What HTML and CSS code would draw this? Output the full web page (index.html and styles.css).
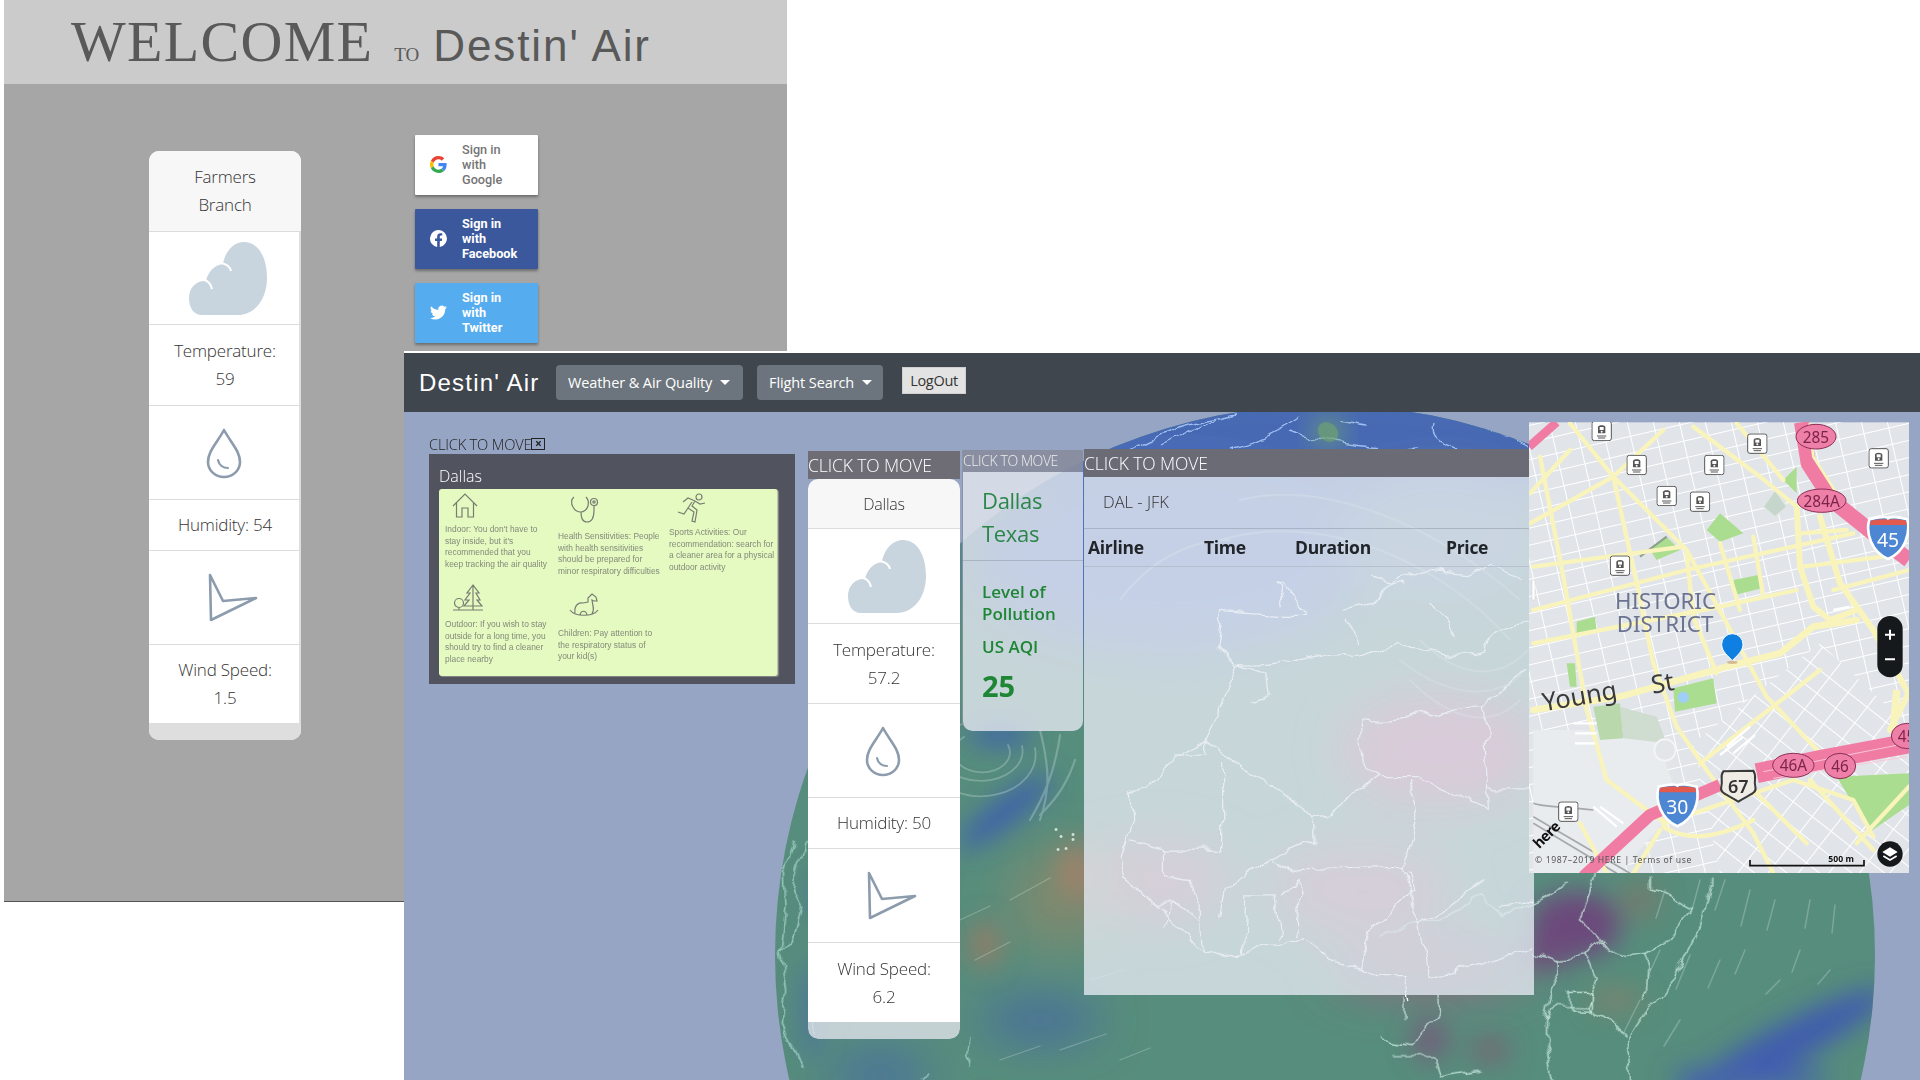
FILE: index.html
```html
<!DOCTYPE html>
<html lang="en">
<head>
  <meta charset="UTF-8" />
  <title>Destin' Air</title>
  <link rel="stylesheet" href="styles.css">
</head>
<body>
  <svg class="defs" width="0" height="0">
    <symbol id="cloud" viewBox="0 0 78 73">
      <path d="M13 73C4 73 0 65 0 56C0 45 8 38 17 39C19 30 25 23 34 22C36 10 44 0 55 0C69 0 78 15 78 36C78 58 65 73 49 73Z" fill="#c9d5de"/>
      <path d="M15 38C19 39 22 42 23 47M32 21C37 22 41 25 42 29" fill="none" stroke="#fff" stroke-width="2"/>
    </symbol>
    <symbol id="drop" viewBox="0 0 36 52">
      <path d="M18 3C11 16 2 24 2 35A16 15 0 0 0 34 35C34 24 25 16 18 3Z" fill="none" stroke="#8c9cad" stroke-width="2.6" stroke-linejoin="round"/>
      <path d="M12 33C13 38 17 41 22 41" fill="none" stroke="#8c9cad" stroke-width="2.2" stroke-linecap="round"/>
    </symbol>
    <symbol id="wind" viewBox="0 0 50 49">
      <path d="M2 2L15 28L48 25L3 47Z" fill="none" stroke="#8c9cad" stroke-width="2.6" stroke-linejoin="round"/>
    </symbol>
    <symbol id="train" viewBox="0 0 62 62">
      <rect x="2" y="2" width="58" height="58" rx="7" fill="#fff" stroke="#555" stroke-width="3"/>
      <path d="M20 38V20C20 12 42 12 42 20V38Z" fill="#555"/>
      <rect x="25" y="19" width="12" height="9" fill="#fff"/>
      <circle cx="31" cy="33" r="3" fill="#fff"/>
      <path d="M17 46H45M20 52H42" stroke="#555" stroke-width="3"/>
    </symbol>
    <pattern id="blocksA" width="76" height="50" patternUnits="userSpaceOnUse" patternTransform="rotate(-13)">
      <path d="M0 0H76M0 0V50" stroke="#fff" stroke-width="6" fill="none"/>
    </pattern>
    <pattern id="blocksB" width="72" height="60" patternUnits="userSpaceOnUse" patternTransform="rotate(38)">
      <path d="M0 0H72M0 0V60" stroke="#fff" stroke-width="6" fill="none"/>
    </pattern>
    <filter id="soft" x="-50%" y="-50%" width="200%" height="200%"><feGaussianBlur stdDeviation="24"/></filter>
    <filter id="softer" x="-50%" y="-50%" width="200%" height="200%"><feGaussianBlur stdDeviation="13"/></filter>
    <filter id="wobble" x="-5%" y="-5%" width="110%" height="110%">
      <feTurbulence type="fractalNoise" baseFrequency=".035" numOctaves="3" seed="4"/>
      <feDisplacementMap in="SourceGraphic" scale="16" xChannelSelector="R" yChannelSelector="G"/>
    </filter>
    <clipPath id="globeClip"><circle cx="1325" cy="955" r="550"/></clipPath>
  </svg>

  <!-- login page behind -->
  <div class="login">
    <header class="login-head">
      <span class="welcome">WELCOME</span>
      <span class="to">TO</span>
      <span class="brand-big">Destin' Air</span>
    </header>
    <div class="login-body">
      <div class="card card-login">
        <div class="row row-head"><span>Farmers<br>Branch</span></div>
        <div class="row row-cloud"><svg class="ic-cloud"><use href="#cloud"/></svg></div>
        <div class="row row-text2"><span>Temperature:<br>59</span></div>
        <div class="row row-icon"><svg class="ic-drop"><use href="#drop"/></svg></div>
        <div class="row row-text1"><span>Humidity: 54</span></div>
        <div class="row row-icon"><svg class="ic-wind"><use href="#wind"/></svg></div>
        <div class="row row-text2 row-last"><span>Wind Speed:<br>1.5</span></div>
        <div class="card-foot"></div>
      </div>
      <div class="socials">
        <a class="social google">
          <svg viewBox="0 0 48 48"><path fill="#EA4335" d="M24 9.500c3.500 0 6.700 1.200 9.200 3.600l6.900-6.900C35.900 2.400 30.500 0 24 0 14.600 0 6.500 5.400 2.600 13.200l8 6.200C12.500 13.700 17.800 9.500 24 9.500z"/><path fill="#4285F4" d="M46.900 24.500c0-1.600-.1-3.100-.4-4.500H24v9h12.900c-.6 3-2.200 5.500-4.700 7.200l7.700 6c4.500-4.200 7-10.300 7-17.700z"/><path fill="#FBBC05" d="M10.500 28.600c-.5-1.400-.8-3-.8-4.600s.3-3.200.8-4.600l-8-6.200C.9 16.500 0 20.100 0 24s.9 7.500 2.600 10.800l7.900-6.200z"/><path fill="#34A853" d="M24 48c6.500 0 11.900-2.100 15.900-5.800l-7.700-6c-2.200 1.500-4.900 2.300-8.200 2.300-6.200 0-11.500-4.200-13.400-9.900l-8 6.200C6.500 42.600 14.600 48 24 48z"/></svg>
          <span>Sign in<br>with<br>Google</span>
        </a>
        <a class="social facebook">
          <svg viewBox="0 0 24 24"><path fill="#fff" d="M24 12a12 12 0 1 0-13.900 11.900v-8.400H7.100V12h3V9.400c0-3 1.800-4.700 4.500-4.700 1.300 0 2.700.2 2.700.2v3h-1.500c-1.500 0-2 .9-2 1.900V12h3.400l-.5 3.500h-2.900v8.400A12 12 0 0 0 24 12z"/></svg>
          <span>Sign in<br>with<br>Facebook</span>
        </a>
        <a class="social twitter">
          <svg viewBox="0 0 24 24"><path fill="#fff" d="M23.900 4.600a9.800 9.800 0 0 1-2.800.8 4.900 4.900 0 0 0 2.200-2.700 9.900 9.900 0 0 1-3.100 1.200 4.900 4.900 0 0 0-8.400 4.500A14 14 0 0 1 1.700 3.200a4.900 4.900 0 0 0 1.500 6.600 4.900 4.900 0 0 1-2.200-.6c0 2.400 1.700 4.400 3.900 4.900a4.900 4.900 0 0 1-2.200.1 4.900 4.900 0 0 0 4.600 3.400A9.900 9.900 0 0 1 0 19.600a14 14 0 0 0 7.500 2.200c9.100 0 14.300-7.700 14-14.600a10 10 0 0 0 2.400-2.600z"/></svg>
          <span>Sign in<br>with<br>Twitter</span>
        </a>
      </div>
    </div>
  </div>

  <!-- logged in page -->
  <div class="main">
    <svg class="globe" viewBox="404 353 1516 727">
      <g clip-path="url(#globeClip)">
        <rect x="770" y="400" width="1120" height="680" fill="#578d7c"/>
        <g filter="url(#soft)">
          <ellipse cx="1320" cy="440" rx="340" ry="70" fill="#4769b4"/>
          <ellipse cx="1170" cy="560" rx="200" ry="95" fill="#5371bd"/>
          <ellipse cx="1440" cy="540" rx="100" ry="60" fill="#6a88a8"/>
          <ellipse cx="1440" cy="750" rx="100" ry="55" fill="#b8567f"/>
          <ellipse cx="1160" cy="880" rx="70" ry="40" fill="#a8697c"/>
          <ellipse cx="1360" cy="890" rx="90" ry="45" fill="#a0667e"/>
          <ellipse cx="1430" cy="965" rx="100" ry="26" fill="#97667f"/>
          <ellipse cx="1040" cy="1020" rx="60" ry="18" fill="#4565a4"/>
          <ellipse cx="880" cy="1075" rx="50" ry="22" fill="#4a6da0"/>
          <ellipse cx="1060" cy="900" rx="50" ry="50" fill="#7e8a70"/>
        </g>
        <g filter="url(#softer)">
          <ellipse cx="1005" cy="812" rx="58" ry="13" fill="#3d5fae" transform="rotate(-38 1005 812)"/>
          <ellipse cx="1000" cy="735" rx="32" ry="10" fill="#3b5eb0"/>
          <ellipse cx="1075" cy="870" rx="18" ry="28" fill="#a98267" opacity=".75"/>
          <ellipse cx="985" cy="945" rx="16" ry="24" fill="#a8785f" opacity=".7"/>
          <ellipse cx="820" cy="895" rx="10" ry="28" fill="#4a6ea0" opacity=".7"/>
          <ellipse cx="812" cy="1010" rx="10" ry="50" fill="#4a6ca8" opacity=".8"/>
          <ellipse cx="1575" cy="925" rx="46" ry="34" fill="#6c4a7c"/>
          <ellipse cx="1545" cy="955" rx="24" ry="16" fill="#6e4b7c"/>
          <ellipse cx="1640" cy="900" rx="20" ry="20" fill="#7d7568" opacity=".7"/>
          <ellipse cx="1430" cy="1040" rx="18" ry="22" fill="#77577a" opacity=".85"/>
          <ellipse cx="1490" cy="1050" rx="20" ry="14" fill="#7a5f72" opacity=".8"/>
          <ellipse cx="1615" cy="1000" rx="28" ry="12" fill="#8a7f68" opacity=".7"/>
          <ellipse cx="1785" cy="1045" rx="115" ry="20" fill="#3f5caf" transform="rotate(-28 1785 1045)"/>
          <ellipse cx="1750" cy="1078" rx="80" ry="12" fill="#4561b0"/>
        </g>
        <!-- swirls and wind streaks -->
        <g fill="none" stroke="#cfe6e0" stroke-linecap="round" opacity=".3">
          <path d="M1008 745a28 20 0 1 1-44-8M1022 746a42 30 0 1 1-60-22M1035 748a55 42 0 1 1-82-30" stroke-width="1.800"/>
          <path d="M1060 735C1055 770 1045 795 1030 820M1075 760C1065 790 1050 805 1040 815M1040 730C1050 770 1050 790 1040 820" stroke-width="2.200"/>
          <path d="M960 920l30-14M975 960l35-18M1010 900l40-22M1090 980l34-10M830 780l12-30M820 850l8-30M1000 1060l40-14M1060 1050l46-16M1120 1060l30-12" stroke-width="1.300"/>
          <path d="M1700 880l-9 34M1725 880l-10 30M1750 890l-9 36M1775 900l-8 30M1660 950l-12 26M1690 955l-14 34M1720 960l-12 28M1640 1000l-16 32M1680 1020l-16 26M1810 900l-5 28M1835 905l-3 28M1780 980l-14 14M1830 970l-12 14M1665 890l-9 28M1745 950l-10 24M1800 950l-8 22" stroke-width="1.500"/>
          <path d="M1240 500C1320 480 1430 520 1520 600M1220 540C1320 510 1440 560 1510 640M1410 680C1450 720 1490 730 1520 700M1400 660C1450 700 1500 700 1525 670M1420 640C1460 680 1500 680 1528 650M1120 600C1150 560 1190 540 1230 540" stroke-width="2"/>
        </g>
        <!-- top of the globe -->
        <g fill="none" stroke="#9fbdee" stroke-width="1.400" filter="url(#wobble)">
          <path d="M1130 449C1160 432 1200 420 1240 414M1165 446L1215 420M1230 447C1260 440 1285 425 1300 415M1340 420L1370 425M1435 425C1430 440 1450 445 1460 448M1470 420L1525 448M1290 432C1330 445 1390 452 1420 449"/>
        </g>
        <ellipse cx="1328" cy="432" rx="15" ry="12" fill="#6fa56d" filter="url(#softer)"/>
        <ellipse cx="1328" cy="432" rx="11" ry="9" fill="#6fa56d" opacity=".6" transform="rotate(40 1328 432)"/>
        <!-- coast and borders, north Africa -->
        <g filter="url(#wobble)">
          <g fill="none" stroke="#fff" stroke-width="1.300" transform="translate(790 440) scale(.485 .408)">
            <path vector-effect="non-scaling-stroke" d="M1690 200C1660 240 1660 300 1560 420C1500 460 1440 470 1430 520C1370 540 1300 520 1250 490C1200 520 1160 540 1140 520C1060 530 990 560 925 550L880 680L855 740L800 770L740 850L700 870L700 960L680 1020L690 1075L745 1130L790 1180L850 1265L930 1250L1000 1240L1060 1225L1110 1270L1170 1290L1210 1320L1270 1320L1280 1380"/>
            <path vector-effect="non-scaling-stroke" d="M890 420L880 510L925 550M890 420L1000 430L1060 430L1000 340L1015 400M1140 420L1200 400L1250 340L1300 320L1400 330L1450 300L1500 340M1150 440L1170 500M1320 400L1370 480M1200 330L1270 350"/>
            <path vector-effect="non-scaling-stroke" d="M925 550L985 575L990 630L950 645M855 740L1060 905L1080 925L1080 990L1000 1020L900 1100L890 1170M890 790V1005H770M855 740V770H795M1175 680L1185 800L1220 825L1110 915L1080 925M1220 825L1290 825L1440 905L1430 650M1440 855H1530M1275 835L1295 900L1260 1050L1290 1170L1300 1190M1430 1080L1300 1190L1320 1320L1530 1240M1000 1020L1040 1070L1070 1055L1260 1050M1270 1060L1280 1100L1200 1200L1170 1290M940 1115H1000L1010 1220M940 1115L935 1250M1010 1115L1050 1085L1045 1220M745 1135H790L770 1190M700 980L770 1005V1070L830 1080L845 1130L850 1265M790 1135L845 1180M1175 680C1270 700 1400 640 1430 650L1520 560M1460 1140L1530 1130"/>
          </g>
          <!-- east Africa -->
          <g fill="none" stroke="#c9eadf" stroke-width="1.200" transform="translate(1380 780) scale(.3448 .3333)">
            <path vector-effect="non-scaling-stroke" d="M965 280V320L930 450L870 570L790 680L720 790L730 900M790 280V330L900 390L830 490L780 520L770 660M620 280L600 350L575 410L640 485L600 530L530 540L450 520L440 510M640 485L660 510L720 530L780 520M600 530L630 600L600 680L510 680L480 720L480 800L500 900M600 680L720 770M0 470L100 440L210 400L300 340L350 400L440 370L490 350L550 300M525 540V580L495 650L480 720M180 640V680L130 740L100 800L30 790L0 770M30 830H150L170 890L290 870M75 650V720M550 640H610V690H550Z"/>
          </g>
          <!-- south America edge -->
          <path fill="none" stroke="#a9d6ce" stroke-width="1.200" transform="translate(760 700) scale(.3333)" vector-effect="non-scaling-stroke" d="M135 430L95 570L125 620L100 720L60 760L80 870L70 960L130 1100M145 930L160 1000M110 430L70 520L75 620L60 760M630 1020L620 1100M480 1130L510 1115"/>
        </g>
        <path fill="#cfe2dc" d="M1056 831a1.500 1.500 0 1 1 .1 0M1061 838a1.500 1.500 0 1 1 .1 0M1073 836a1.500 1.500 0 1 1 .1 0M1073 841a1.500 1.500 0 1 1 .1 0M1066 850a1.500 1.500 0 1 1 .1 0M1058 851a1.500 1.500 0 1 1 .1 0"/>
      </g>
    </svg>

    <nav class="navbar">
      <span class="brand">Destin' Air</span>
      <a class="nav-btn nav-weather">Weather &amp; Air Quality<i class="caret"></i></a>
      <a class="nav-btn nav-flight">Flight Search<i class="caret"></i></a>
      <button class="logout">LogOut</button>
    </nav>

    <!-- movable windows -->
    <section class="win win-advice">
      <div class="move-plain">CLICK TO MOVE<span class="close-x">×</span></div>
      <div class="advice-box">
        <div class="advice-city">Dallas</div>
        <div class="advice-grid">
          <div class="tip">
            <svg class="tip-ic house" viewBox="0 0 26 25"><path d="M1 13L13 1L25 13M4.500 10V24H10V15H16V24H21.500V10"/></svg>
            <p class="gap-6">Indoor: You don't have to<br>stay inside, but it's<br>recommended that you<br>keep tracking the air quality</p>
          </div>
          <div class="tip">
            <svg class="tip-ic steth" viewBox="0 0 28 28"><path d="M4 2C1 4 1 9 3 12C5 16 9 17 11 17C13 17 17 15 18 11C19 7 18 4 16 2M11 17C11 22 12 27 17 27C22 27 24 23 24 15V11"/><circle cx="24" cy="7" r="3.500"/><circle cx="24" cy="7" r="1.200"/></svg>
            <p class="gap-8">Health Sensitivities: People<br>with health sensitivities<br>should be prepared for<br>minor respiratory difficulties</p>
          </div>
          <div class="tip">
            <svg class="tip-ic runner" viewBox="0 0 30 30"><circle cx="22" cy="4" r="3"/><path d="M1 19L7 21L11 15L17 19L15 28L18 29L20 17L15 13L18 8L23 11L28 10M18 8L11 5L6 9M11 15L15 9"/></svg>
            <p class="gap-4">Sports Activities: Our<br>recommendation: search for<br>a cleaner area for a physical<br>outdoor activity</p>
          </div>
          <div class="tip tip-low">
            <svg class="tip-ic trees" viewBox="0 0 30 27"><circle cx="6" cy="19" r="4.500"/><path d="M0 26H30M6 23.500V26M20 26V1M20 1L14 9H17L12 16H16L11 22H29L24 16H27L23 9H26Z"/></svg>
            <p class="gap-8">Outdoor: If you wish to stay<br>outside for a long time, you<br>should try to find a cleaner<br>place nearby</p>
          </div>
          <div class="tip tip-horse">
            <svg class="tip-ic horse" viewBox="0 0 30 25"><path d="M1 17C6 24 24 24 29 17M6 20C5 13 9 9 14 10L19 9L19 5L23 1L27 4L28 8L25 8L23 7L24 13C25 16 24 19 23 21M11 22C12 17 17 17 18 22"/></svg>
            <p class="gap-10">Children: Pay attention to<br>the respiratory status of<br>your kid(s)</p>
          </div>
        </div>
      </div>
    </section>

    <section class="win win-weather">
      <div class="move-head">CLICK TO MOVE</div>
      <div class="card card-main">
        <div class="row row-head-small"><span>Dallas</span></div>
        <div class="row row-cloud-b"><svg class="ic-cloud"><use href="#cloud"/></svg></div>
        <div class="row row-text2-b"><span>Temperature:<br>57.2</span></div>
        <div class="row row-icon-b"><svg class="ic-drop"><use href="#drop"/></svg></div>
        <div class="row row-text1-b"><span>Humidity: 50</span></div>
        <div class="row row-icon-b"><svg class="ic-wind"><use href="#wind"/></svg></div>
        <div class="row row-text2-b row-last"><span>Wind Speed:<br>6.2</span></div>
        <div class="card-foot foot-clear"></div>
      </div>
    </section>

    <section class="win win-aqi">
      <div class="move-small">CLICK TO MOVE</div>
      <div class="aqi-place">Dallas<br>Texas</div>
      <div class="aqi-body">
        <div class="aqi-label">Level of<br>Pollution</div>
        <div class="aqi-label aqi-us">US AQI</div>
        <div class="aqi-num">25</div>
      </div>
    </section>

    <section class="win win-flights">
      <div class="move-flights">CLICK TO MOVE</div>
      <div class="route">DAL - JFK</div>
      <table class="flights">
        <tr><th class="c-air">Airline</th><th class="c-time">Time</th><th class="c-dur">Duration</th><th>Price</th></tr>
      </table>
    </section>

    <section class="win win-map">
      <svg class="map" viewBox="0 0 380 451">
        <g transform="translate(-9 -12) scale(.33333)">
          <rect x="27" y="37" width="1140" height="1353" fill="#e1e5e9"/>
          <rect x="27" y="37" width="1140" height="1353" fill="url(#blocksA)"/>
          <path d="M520 1000L900 700L1167 950V1390H600Z" fill="#e1e5e9"/>
          <path d="M520 1000L900 700L1167 950V1390H600Z" fill="url(#blocksB)"/>
          <path d="M40 960H400L480 1180L300 1390H40Z" fill="#e9ecef"/>
          <path d="M600 310L670 370L600 395L560 360ZM640 510L715 495L725 535L645 555ZM170 635L225 620L230 660L170 675ZM460 835L580 805L590 880L465 905ZM790 210L830 170V250ZM390 420L440 380L480 420L410 450ZM140 760L165 760L170 830L150 830ZM950 1100L1167 1090V1185L1050 1265Z" fill="#aadd90"/>
          <path d="M220 890L300 880L310 985L240 990Z" fill="#b9d9ad"/>
          <path d="M300 890L410 920L440 1000L310 985Z" fill="#cfdcd0"/>
          <ellipse cx="490" cy="862" rx="17" ry="17" fill="#9fcff5"/>
          <circle cx="435" cy="1020" r="32" fill="#e2e6e9" stroke="#f2f4f5" stroke-width="6"/>
          <path d="M730 290L765 240L800 290L765 320Z" fill="#c7d6cc" stroke="#dfe6df" stroke-width="4"/>
          <path d="M40 1220L330 1390M40 1240L290 1390M220 1200C120 1190 60 1190 40 1180" fill="none" stroke="#a6a9ab" stroke-width="5"/>
          <path d="M360 440L440 380" stroke="#8fa08a" stroke-width="7"/>
          <g fill="none" stroke="#f9f4bb" stroke-width="13" stroke-linejoin="round" stroke-linecap="round">
            <path d="M60 140L130 500L200 900L260 1110L380 1200L440 1240"/>
            <path d="M150 40L280 200L500 420L620 640L740 860L920 1050" />
            <path d="M280 200L350 520L400 760L470 950L560 1080L700 1270L760 1390"/>
            <path d="M30 340L280 200L430 60M30 250L150 120"/>
            <path d="M40 600L500 480L1000 370M40 700L600 590L830 540M40 470L490 410"/>
            <path d="M500 430L520 620L590 790M600 400L660 600M700 380L730 560"/>
            <path d="M520 50L720 200L830 290M650 40L790 210"/>
            <path d="M40 900L300 860L620 770L780 730L880 650L1010 630" stroke-width="20"/>
            <path d="M830 290L840 470L880 590L930 630L1010 600M900 320L960 520L1060 660L1165 850L1110 960" stroke-width="18"/>
            <path d="M850 470L1167 430M840 370L980 360M940 540L1167 480"/>
            <path d="M540 1060L900 780M430 1240L820 1110L1000 1170L1060 1280M870 1110L1060 1320M690 1130L860 1300M430 1250C520 1310 640 1260 700 1230M1010 1300L1167 1130" />
            <path d="M180 1240L260 1390M420 1260L340 1390" />
          </g>
          <g fill="none" stroke="#fff" stroke-width="7">
            <path d="M620 1010L690 950M640 1030L705 975M600 1035L670 980M160 940H230M165 970H230M165 1000H225"/>
            <path d="M940 600L990 590M220 1190L290 1250M240 1190L310 1240"/>
          </g>
          <g fill="none" stroke-linejoin="round">
            <path d="M845 37L865 160L935 270L1060 370L1167 450" stroke="#f07ca4" stroke-width="46"/>
            <path d="M868 40L880 140L950 250" stroke="#f9f4bb" stroke-width="8"/>
            <path d="M27 110L110 37" stroke="#f07ca4" stroke-width="26"/>
            <path d="M190 1400L390 1215L600 1125" stroke="#f07ca4" stroke-width="36"/>
            <path d="M710 1090L900 1050L1167 1000" stroke="#f07ca4" stroke-width="60"/>
            <path d="M730 1085L1160 1000M760 1105L1160 1040" stroke="#fbc6d8" stroke-width="3"/>
          </g>
          <path d="M1120 960L1130 840" stroke="#f9f4bb" stroke-width="22"/>
          <rect x="36" y="510" width="9" height="60" rx="2" fill="#fff" stroke="#b8bcc0"/>
          <use href="#train" x="214" y="32" width="62" height="62"/>
          <use href="#train" x="319" y="134" width="62" height="62"/>
          <use href="#train" x="552" y="134" width="62" height="62"/>
          <use href="#train" x="681" y="70" width="62" height="62"/>
          <use href="#train" x="1045" y="114" width="62" height="62"/>
          <use href="#train" x="409" y="227" width="62" height="62"/>
          <use href="#train" x="509" y="244" width="62" height="62"/>
          <use href="#train" x="269" y="436" width="62" height="62"/>
          <use href="#train" x="114" y="1174" width="62" height="62"/>

          <g class="shield-text">
            <ellipse cx="888" cy="80" rx="60" ry="37" fill="#ee7fa6" stroke="#8d2d55" stroke-width="3"/>
            <text x="888" y="98" fill="#7c2349" text-anchor="middle">285</text>
            <ellipse cx="905" cy="272" rx="73" ry="35" fill="#ee7fa6" stroke="#8d2d55" stroke-width="3"/>
            <text x="905" y="290" fill="#7c2349" text-anchor="middle">284A</text>
            <ellipse cx="820" cy="1066" rx="62" ry="36" fill="#ee7fa6" stroke="#8d2d55" stroke-width="3"/>
            <text x="820" y="1084" fill="#7c2349" text-anchor="middle">46A</text>
            <ellipse cx="960" cy="1068" rx="47" ry="38" fill="#ee7fa6" stroke="#8d2d55" stroke-width="3"/>
            <text x="960" y="1086" fill="#7c2349" text-anchor="middle">46</text>
            <ellipse cx="1162" cy="978" rx="48" ry="38" fill="#ee7fa6" stroke="#8d2d55" stroke-width="3"/>
            <text x="1133" y="996" fill="#7c2349">45</text>

            <path d="M1048 328C1075 322 1100 318 1104 325C1110 318 1140 322 1162 328C1172 370 1155 425 1104 447C1055 425 1036 370 1048 328Z" fill="#4d87d3" stroke="#fff" stroke-width="8"/>
            <path d="M1052 332C1075 328 1098 326 1104 330C1110 326 1140 328 1158 332L1160 345H1050Z" fill="#e25a4e"/>
            <text x="1104" y="410" fill="#fff" text-anchor="middle" class="shield-big">45</text>

            <path d="M416 1130C443 1124 468 1120 472 1127C478 1120 508 1124 530 1130C540 1172 523 1227 472 1249C423 1227 404 1172 416 1130Z" fill="#4d87d3" stroke="#fff" stroke-width="8"/>
            <path d="M420 1134C443 1130 466 1128 472 1132C478 1128 508 1130 526 1134L528 1147H418Z" fill="#e25a4e"/>
            <text x="472" y="1212" fill="#fff" text-anchor="middle" class="shield-big">30</text>

            <path d="M610 1084L700 1082C712 1100 700 1110 706 1130C712 1150 690 1152 655 1175C620 1152 598 1150 604 1130C610 1110 598 1100 610 1084Z" fill="#efece5" stroke="#3a3a3a" stroke-width="6"/>
            <text x="655" y="1150" fill="#333" text-anchor="middle" class="shield-67">67</text>
          </g>

          <text class="map-district" x="285" y="596" textLength="303" lengthAdjust="spacingAndGlyphs">HISTORIC</text>
          <text class="map-district" x="290" y="666" textLength="290" lengthAdjust="spacingAndGlyphs">DISTRICT</text>
          <text class="map-street" transform="translate(72 904) rotate(-10)">Young</text>
          <text class="map-street" transform="translate(398 851) rotate(-10)">St</text>

          <path d="M637 752C625 738 605 725 605 703A32 32 0 0 1 669 703C669 725 649 738 637 752Z" fill="#0f80e2" stroke="#fff" stroke-width="3"/>
          <ellipse cx="637" cy="757" rx="16" ry="5" fill="#c9a27c" opacity=".7"/>

          <text class="map-here" transform="translate(58 1318) rotate(-45)">here</text>
          <text class="map-copy" x="45" y="1358">© 1987–2019 HERE | Terms of use</text>
          <text class="map-scale" x="925" y="1355">500 m</text>
          <path d="M690 1350V1367H1032V1350" fill="none" stroke="#111" stroke-width="5"/>

          <rect x="1072" y="618" width="76" height="184" rx="38" fill="#15191c"/>
          <path d="M1095 674H1125M1110 659V689M1095 748H1125" stroke="#fff" stroke-width="6"/>
          <circle cx="1110" cy="1332" r="38" fill="#15191c"/>
          <path d="M1110 1312L1133 1326L1110 1340L1087 1326Z" fill="#fff"/>
          <path d="M1090 1338L1110 1350L1130 1338" fill="none" stroke="#fff" stroke-width="5"/>
        </g>
      </svg>
    </section>
  </div>
</body>
</html>
```

FILE: styles.css
```css
* {
  box-sizing: border-box;
  margin: 0;
  padding: 0;
}

html, body {
  width: 1920px;
  height: 1080px;
  overflow: hidden;
  background: #fff;
}

body {
  position: relative;
  font-family: "Open Sans", sans-serif;
  color: #333;
}

.defs {
  position: absolute;
}

/* login page */
.login {
  position: absolute;
  left: 4px;
  top: 0;
  width: 783px;
  height: 902px;
  background: #a6a6a6;
  border-bottom: 1px solid #555;
}

.login-head {
  height: 84px;
  background: #cbcbcb;
  color: #595959;
  padding: 0 0 0 67px;
  display: flex;
  align-items: baseline;
  line-height: 84px;
}

.welcome {
  font: 58px/84px "Liberation Serif", serif;
  letter-spacing: 1.300px;
}

.to {
  font: 19px/84px "Liberation Serif", serif;
  margin-left: 21px;
}

.brand-big {
  font: 44px/84px "Comic Sans MS", "Liberation Sans", sans-serif;
  letter-spacing: 1.900px;
  margin-left: 14px;
}

.card {
  background: #fff;
  border-radius: 10px;
  overflow: hidden;
  font-weight: 300;
  font-size: 17px;
  line-height: 28px;
  letter-spacing: -.2px;
  color: #333;
  text-align: center;
}

.card-login {
  position: absolute;
  left: 145px;
  top: 151px;
  width: 152px;
  height: 589px;
  box-shadow: inset -2px 0 0 #dedede;
}

.row {
  display: flex;
  align-items: center;
  justify-content: center;
  border-bottom: 1px solid #dcdcdc;
}

.row-last {
  border-bottom: 0;
}

.row-head { height: 81px; background: #f7f7f7; }
.row-cloud { height: 93px; }
.row-text2 { height: 81px; }
.row-icon { height: 94px; }
.row-text1 { height: 51px; }
.row-last.row-text2 { height: 78px; }

.card-foot {
  height: 18px;
  background: #dedede;
}

.ic-cloud { width: 78px; height: 73px; margin-left: 6px; }
.ic-drop { width: 36px; height: 52px; margin-left: -3px; }
.ic-wind { width: 50px; height: 49px; margin-left: 15px; }

.socials {
  position: absolute;
  left: 411px;
  top: 135px;
  display: flex;
  flex-direction: column;
  gap: 14px;
}

.social {
  width: 123px;
  height: 60px;
  display: flex;
  align-items: center;
  gap: 15px;
  padding: 0 0 2px 15px;
  border-radius: 1px;
  box-shadow: 0 2px 3px rgba(0, 0, 0, .35);
  font: 700 12.700px/15px Roboto, sans-serif;
  color: #fff;
}

.social svg {
  width: 17px;
  height: 17px;
  flex: none;
}

.google { background: #fff; color: #757575; font-weight: 500; }
.facebook { background: #3a589b; }
.twitter { background: #55acee; }

/* main page */
.main {
  position: absolute;
  left: 404px;
  top: 351px;
  width: 1516px;
  height: 729px;
  overflow: hidden;
  background: #97a5c4;
  border-top: 2px solid #fff;
}

.globe {
  position: absolute;
  left: 0;
  top: 0;
  width: 1516px;
  height: 727px;
}

.navbar {
  position: relative;
  height: 59px;
  background: #3f464e;
  display: flex;
  align-items: center;
  padding-left: 16px;
}

.brand {
  font: 24px "Comic Sans MS", "Liberation Sans", sans-serif;
  letter-spacing: 1.200px;
  color: #fff;
  width: 136px;
  margin-left: -1px;
  padding-right: 0;
}

.nav-btn {
  height: 35px;
  background: #6c757d;
  border-radius: 4px;
  color: #fff;
  font-size: 14.500px;
  line-height: 35px;
  padding-left: 12px;
  letter-spacing: -.1px;
}

.nav-weather { width: 187px; margin-right: 14px; margin-left: 1px; }
.nav-flight { width: 126px; margin-right: 19px; }

.caret {
  display: inline-block;
  margin-left: 8px;
  vertical-align: 3px;
  border-top: 5px solid #fff;
  border-left: 5px solid transparent;
  border-right: 5px solid transparent;
}

.logout {
  width: 64px;
  height: 27px;
  margin-top: -5px;
  background: #e3e3e3;
  border: 1px solid #d0d0d0;
  color: #333;
  font: 14.500px "Open Sans", sans-serif;
  letter-spacing: -.3px;
}

.win {
  position: absolute;
}

.win-advice {
  left: 25px;
  top: 80px;
  width: 366px;
}

.move-plain {
  display: flex;
  align-items: center;
  height: 21px;
  font-size: 14.700px;
  font-weight: 300;
  letter-spacing: -.2px;
  color: #222;
}

.close-x {
  width: 14px;
  height: 12px;
  border: 1px solid #222;
  font-size: 12px;
  line-height: 9px;
  font-weight: 700;
  text-align: center;
}

.advice-box {
  height: 230px;
  background: #51535f;
  padding: 0 10px;
}

.advice-city {
  height: 35px;
  padding-top: 10px;
  color: #fff;
  font-size: 16px;
  line-height: 24px;
  font-weight: 300;
}

.advice-grid {
  width: 339px;
  height: 187px;
  background: #e5fac0;
  border-radius: 3px;
  box-shadow: 1px 1px 1px #888;
  border-right: 1px solid #b8c8a8;
  display: grid;
  grid-template-columns: 113px 111px 1fr;
  grid-template-rows: 89px 1fr;
  padding-left: 6px;
  font: 8.400px/11.700px "Liberation Sans", sans-serif;
  color: #848a7c;
}

.tip-ic {
  display: block;
  fill: none;
  stroke: #777d72;
  stroke-width: 1.200;
  margin-top: 4px;
}

.house { width: 26px; height: 25px; margin-left: 7px; }
.steth { width: 28px; height: 28px; margin-left: 12px; margin-top: 6px; }
.runner { width: 30px; height: 30px; margin-left: 8px; }
.trees { width: 30px; height: 27px; margin-left: 8px; margin-top: 6px; }
.horse { width: 30px; height: 25px; margin-left: 11px; margin-top: 15px; }

.gap-4 { margin-top: 4px; }
.gap-6 { margin-top: 6px; }
.gap-8 { margin-top: 8px; }
.gap-10 { margin-top: 10px; }

.win-weather {
  left: 404px;
  top: 98px;
  width: 152px;
}

.move-head {
  height: 28px;
  background: rgba(108, 104, 112, .95);
  color: #fff;
  font-size: 17.500px;
  font-weight: 300;
  line-height: 28px;
  letter-spacing: -.1px;
  white-space: nowrap;
}

.card-main {
  height: 560px;
  background: transparent;
}

.card-main .row {
  background: #fff;
}

.card-main .row-head-small { height: 50px; background: #f7f7f7; }
.row-head-small span { font-size: 16px; }
.row-cloud-b { height: 95px; }
.row-text2-b { height: 80px; }
.row-icon-b { height: 94px; }
.row-text1-b { height: 51px; }
.card-main .row-last { height: 79px; }

.foot-clear {
  height: 17px;
  background: rgba(222, 226, 232, .8);
  border-radius: 0 0 10px 10px;
}

.win-aqi {
  left: 558px;
  top: 97px;
  width: 121px;
  height: 281px;
  background: rgba(226, 231, 239, .8);
  border-radius: 0 0 10px 10px;
  border-left: 1px solid rgba(70, 80, 90, .5);
}

.move-small {
  height: 22px;
  background: rgba(105, 110, 130, .7);
  color: #eee;
  font-size: 14px;
  font-weight: 300;
  line-height: 22px;
  letter-spacing: -.4px;
  white-space: nowrap;
}

.aqi-place {
  height: 89px;
  padding: 12px 0 0 19px;
  border-bottom: 1px solid rgba(150, 160, 175, .6);
  color: #2c8648;
  font-size: 22px;
  line-height: 33px;
  letter-spacing: -.3px;
}

.aqi-body {
  padding: 20px 0 0 19px;
  color: #1f8636;
  font-weight: 600;
  font-size: 17px;
  line-height: 22px;
}

.aqi-us {
  margin-top: 11px;
}

.aqi-num {
  margin-top: 11px;
  font-size: 29px;
  line-height: 34px;
  font-weight: 700;
}

.win-flights {
  left: 680px;
  top: 96px;
  width: 450px;
  height: 546px;
  background: rgba(226, 232, 240, .8);
}

.move-flights {
  height: 28px;
  background: rgba(100, 98, 108, .92);
  color: #fff;
  font-size: 17.500px;
  font-weight: 300;
  line-height: 28px;
  letter-spacing: -.1px;
}

.route {
  height: 52px;
  padding: 13px 0 0 19px;
  font-size: 16.500px;
  line-height: 24px;
  font-weight: 300;
  border-bottom: 1px solid rgba(150, 160, 175, .6);
}

.flights {
  width: 100%;
  border-collapse: collapse;
  text-align: left;
  color: #212529;
}

.flights th {
  height: 37px;
  font-size: 17.500px;
  font-weight: 700;
  letter-spacing: -.3px;
  border-bottom: 1px solid rgba(170, 180, 190, .6);
}

.c-air { width: 120px; padding-left: 4px; }
.c-time { width: 91px; }
.c-dur { width: 151px; }

.win-map {
  left: 1125px;
  top: 69px;
  width: 380px;
  height: 451px;
}

.map {
  display: block;
  width: 380px;
  height: 451px;
}

.shield-text text {
  font: 46px "Noto Sans", sans-serif;
}

.shield-text .shield-big {
  font-size: 58px;
}

.shield-text .shield-67 {
  font-size: 54px;
  font-weight: 600;
}

.map-district {
  font: 66px "Noto Sans", sans-serif;
  fill: #6b7390;
}

.map-street {
  font: 76px "Noto Sans", sans-serif;
  fill: #3a3a3a;
}

.map-here {
  font: 700 44px "Noto Sans", sans-serif;
  fill: #111;
  letter-spacing: -2px;
}

.map-copy {
  font: 26px "Noto Sans", sans-serif;
  fill: #555;
  letter-spacing: 1.800px;
}

.map-scale {
  font: 700 26px "Noto Sans", sans-serif;
  fill: #111;
}
```
